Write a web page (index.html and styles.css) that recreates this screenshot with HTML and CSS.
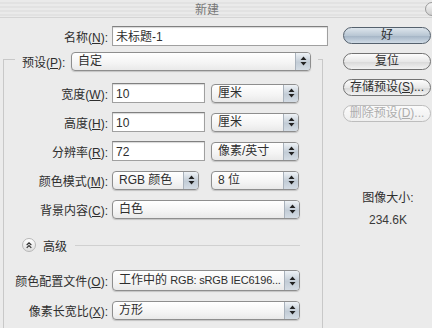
FILE: index.html
```html
<!DOCTYPE html>
<html lang="zh-CN">
<head>
  <meta charset="UTF-8">
  <title>新建</title>
  <link rel="stylesheet" href="styles.css">
</head>
<body>
  <div class="titlebar">
    <span class="title">新建</span>
    <i class="winbtn"></i>
  </div>

  <div class="dialog">
    <div class="main">
      <div class="row name-row">
        <label class="lbl">名称(<u>N</u>):</label>
        <div class="field name">未标题-1</div>
      </div>

      <div class="group">
        <div class="row preset-row">
          <label>预设(<u>P</u>):</label>
          <div class="select preset">自定<span class="arrows"><svg width="7" height="10" viewBox="0 0 7 10"><path d="M3.5 0.5L6.5 4H0.5z M3.5 9.5L6.5 6H0.5z" fill="#222"/></svg></span></div>
        </div>

        <div class="row">
          <label class="lbl">宽度(<u>W</u>):</label>
          <div class="field num">10</div>
          <div class="select unit">厘米<span class="arrows"><svg width="7" height="10" viewBox="0 0 7 10"><path d="M3.5 0.5L6.5 4H0.5z M3.5 9.5L6.5 6H0.5z" fill="#222"/></svg></span></div>
        </div>
        <div class="row">
          <label class="lbl">高度(<u>H</u>):</label>
          <div class="field num">10</div>
          <div class="select unit">厘米<span class="arrows"><svg width="7" height="10" viewBox="0 0 7 10"><path d="M3.5 0.5L6.5 4H0.5z M3.5 9.5L6.5 6H0.5z" fill="#222"/></svg></span></div>
        </div>
        <div class="row">
          <label class="lbl">分辨率(<u>R</u>):</label>
          <div class="field num">72</div>
          <div class="select unit">像素/英寸<span class="arrows"><svg width="7" height="10" viewBox="0 0 7 10"><path d="M3.5 0.5L6.5 4H0.5z M3.5 9.5L6.5 6H0.5z" fill="#222"/></svg></span></div>
        </div>
        <div class="row">
          <label class="lbl">颜色模式(<u>M</u>):</label>
          <div class="select mode">RGB 颜色<span class="arrows"><svg width="7" height="10" viewBox="0 0 7 10"><path d="M3.5 0.5L6.5 4H0.5z M3.5 9.5L6.5 6H0.5z" fill="#222"/></svg></span></div>
          <div class="select unit">8 位<span class="arrows"><svg width="7" height="10" viewBox="0 0 7 10"><path d="M3.5 0.5L6.5 4H0.5z M3.5 9.5L6.5 6H0.5z" fill="#222"/></svg></span></div>
        </div>
        <div class="row">
          <label class="lbl">背景内容(<u>C</u>):</label>
          <div class="select wide">白色<span class="arrows"><svg width="7" height="10" viewBox="0 0 7 10"><path d="M3.5 0.5L6.5 4H0.5z M3.5 9.5L6.5 6H0.5z" fill="#222"/></svg></span></div>
        </div>

        <div class="advanced">
          <span class="chev"><svg width="13" height="13" viewBox="0 0 13 13"><path d="M4 6L6.5 3.5L9 6 M4 9L6.5 6.5L9 9" fill="none" stroke="#333" stroke-width="1.3"/></svg></span>
          <span class="adv-text">高级</span>
          <span class="rule"></span>
        </div>

        <div class="row profile-row">
          <label class="lbl">颜色配置文件(<u>O</u>):</label>
          <div class="select wide">工作中的 <span class="latin">RGB: sRGB IEC6196...</span><span class="arrows"><svg width="7" height="10" viewBox="0 0 7 10"><path d="M3.5 0.5L6.5 4H0.5z M3.5 9.5L6.5 6H0.5z" fill="#222"/></svg></span></div>
        </div>
        <div class="row">
          <label class="lbl">像素长宽比(<u>X</u>):</label>
          <div class="select wide">方形<span class="arrows"><svg width="7" height="10" viewBox="0 0 7 10"><path d="M3.5 0.5L6.5 4H0.5z M3.5 9.5L6.5 6H0.5z" fill="#222"/></svg></span></div>
        </div>
      </div>
    </div>

    <div class="side">
      <div class="btn default">好</div>
      <div class="btn">复位</div>
      <div class="btn">存储预设(<u>S</u>)...</div>
      <div class="btn disabled">删除预设(<u>D</u>)...</div>

      <div class="info">
        <div>图像大小:</div>
        <div class="size">234.6K</div>
      </div>
    </div>
  </div>
</body>
</html>
```

FILE: styles.css
```css
*{
  margin: 0;
  padding: 0;
  box-sizing: border-box;
}
body{
  width: 432px;
  height: 328px;
  overflow: hidden;
  background: #ebebeb;
  color: #2e2e2e;
  font-family: "Liberation Sans", "Noto Sans CJK SC", sans-serif;
  font-size: 12px;
}
u{
  text-underline-offset: 1px;
}

/* title bar */
.titlebar{
  height: 18px;
  display: flex;
  align-items: center;
  justify-content: center;
  padding-right: 18px;
  background: repeating-linear-gradient(#eaeaea 0, #eaeaea 2px, #e2e2e2 2px, #e2e2e2 4px);
  border-bottom: 1px solid #d4d4d4;
  color: #777;
  position: relative;
}
.titlebar .winbtn{
  position: absolute;
  right: -7px;
  top: 2px;
  width: 14px;
  height: 14px;
  border-radius: 50%;
  border: 1px solid #9a9a9a;
  background: linear-gradient(#f6f6f6, #cfcfcf);
}

.dialog{
  display: flex;
}
.main{
  width: 330px;
  padding-top: 8px;
}
.side{
  width: 88px;
  margin-left: 13px;
  padding-top: 9px;
}

/* rows */
.row{
  display: flex;
  align-items: center;
  height: 20px;
}
.row .lbl{
  width: 104px;
  text-align: right;
  margin-right: 4px;
  white-space: nowrap;
}
.name-row .lbl{
  width: 108px;
}

.field{
  height: 20px;
  background: #fff;
  border: 1px solid #a0a0a0;
  border-top-color: #808080;
  box-shadow: inset 0 1px 1px #d8d8d8;
  padding: 2px 3px 0;
  line-height: 16px;
}
.field.name{
  width: 216px;
}
.field.num{
  width: 93px;
  margin-right: 6px;
}

/* popup menus */
.select{
  position: relative;
  height: 19px;
  line-height: 17px;
  padding-left: 6px;
  border: 1px solid #8e8e8e;
  border-radius: 4px;
  background: linear-gradient(#ffffff, #f4f4f4 60%, #e9e9e9);
  box-shadow: 0 1px 1px #c4c4c4;
  white-space: nowrap;
}
.select .arrows{
  position: absolute;
  right: 0;
  top: 0;
  bottom: 0;
  width: 15px;
  display: flex;
  align-items: center;
  justify-content: center;
  border-left: 1px solid #a9b2bc;
  border-radius: 0 3px 3px 0;
  background: linear-gradient(#eef2f6, #c2ccd6 55%, #d4dce4);
}
.select .latin{
  font-size: 11px;
  letter-spacing: -0.2px;
}
.select.unit{
  width: 88px;
}
.select.mode{
  width: 87px;
  margin-right: 12px;
}
.select.wide{
  width: 188px;
}
.select.preset{
  width: 240px;
}

/* preset group frame */
.group{
  margin-left: 3px;
  margin-top: 13px;
  width: 320px;
  height: 280px;
  border: 1px solid #c8c8c8;
  border-bottom: none;
}
.group .row{
  margin-top: 9px;
}
.group .preset-row{
  margin: -8px 0 0 11px;
  width: 303px;
  height: 18px;
  padding: 0 7px;
  background: #ebebeb;
}
.preset-row label{
  width: 45px;
  margin-right: 4px;
  white-space: nowrap;
}
.group .preset-row + .row{
  margin-top: 13px;
}

/* advanced toggle */
.advanced{
  display: flex;
  align-items: center;
  height: 16px;
  margin: 18px 0 0 18px;
}
.chev{
  width: 14px;
  height: 14px;
  border-radius: 50%;
  border: 1px solid #b7b7b7;
  background: linear-gradient(#ffffff, #dedede);
  display: flex;
  align-items: center;
  justify-content: center;
  margin-right: 7px;
}
.adv-text{
  margin-right: 8px;
}
.rule{
  width: 225px;
  border-top: 1px solid #d0d0d0;
}
.group .profile-row{
  margin-top: 17px;
  height: 21px;
}
.profile-row .select{
  height: 21px;
  line-height: 19px;
}

/* buttons */
.btn{
  height: 17px;
  line-height: 15px;
  margin-bottom: 9px;
  text-align: center;
  border: 1px solid #727272;
  border-radius: 9px;
  background: linear-gradient(#fdfdfd, #e8e8e8 50%, #d8d8d8 51%, #f2f2f2);
  white-space: nowrap;
}
.btn.default{
  border-color: #55616d;
  background: linear-gradient(#dde5ec, #b9c7d4 50%, #a2b3c4 51%, #d0dbe6);
}
.btn.disabled{
  color: #adadad;
  border-color: #bdbdbd;
  background: linear-gradient(#fbfbfb, #efefef);
}

.info{
  margin-top: 65px;
  text-align: center;
  line-height: 22px;
  padding-left: 2px;
}
.info .size{
  color: #3a3a3a;
}
```
